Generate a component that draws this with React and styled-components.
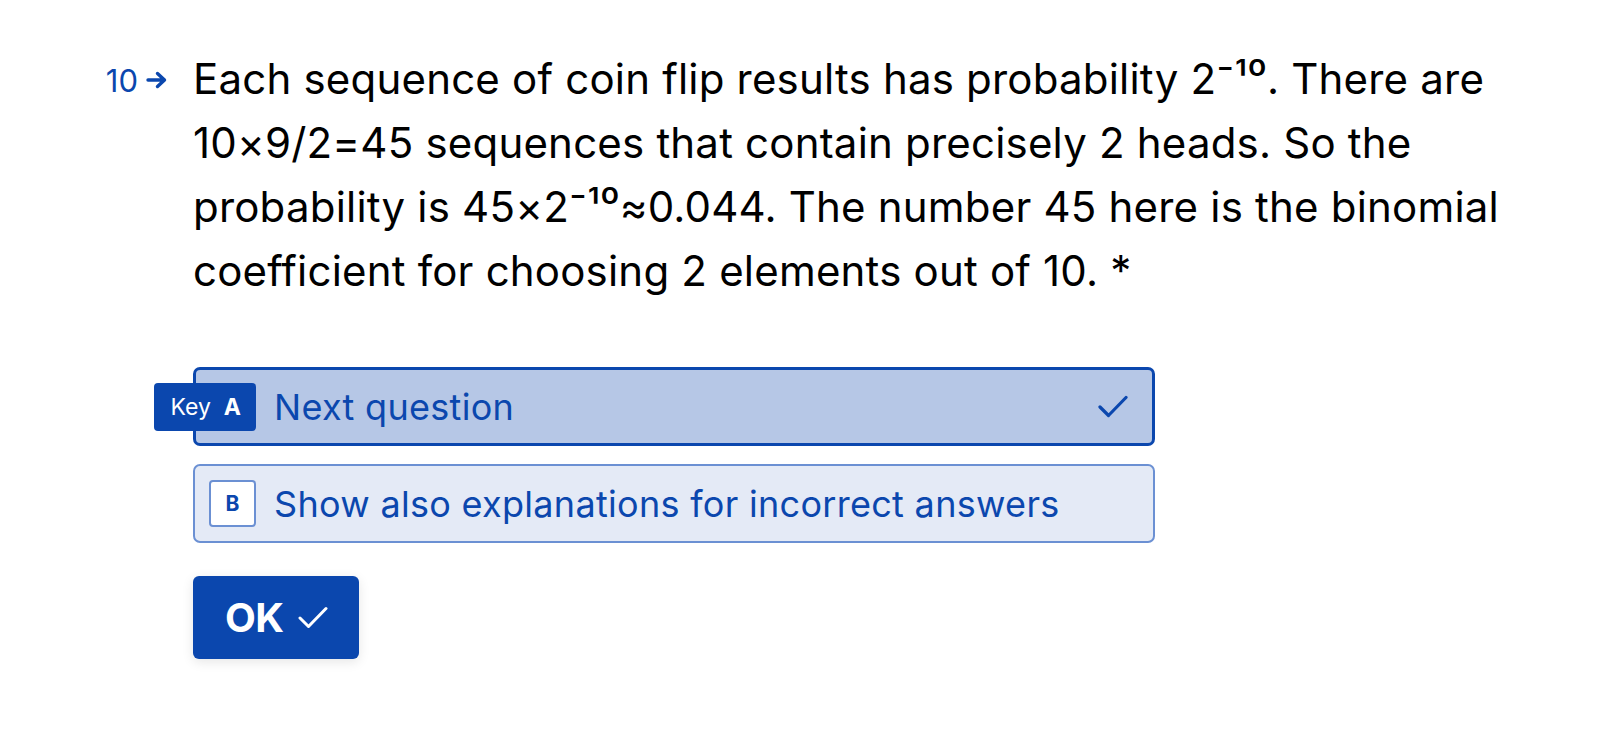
import React from 'react';
import styled, { createGlobalStyle } from 'styled-components';

const GlobalStyle = createGlobalStyle`
    html, body {
        margin: 0;
        padding: 0;
        background: #ffffff;
    }

    body {
        font-family: Inter, "Noto Sans", "Liberation Sans", sans-serif;
        -webkit-font-smoothing: antialiased;
    }
`;

const BLUE = '#0b47ae';

const Page = styled.div`
    display: flex;
    align-items: flex-start;
    padding-top: 47px;
    min-height: 754px;
    box-sizing: border-box;
`;

const Counter = styled.div`
    width: 193px;
    flex-shrink: 0;
    display: flex;
    justify-content: flex-end;
    align-items: center;
    gap: 8px;
    padding-right: 26px;
    box-sizing: border-box;
    height: 66px;
    color: ${BLUE};
    font-size: 31px;
`;

const Content = styled.div`
    display: flex;
    flex-direction: column;
    align-items: flex-start;
`;

const Question = styled.p`
    margin: 0 0 64px 0;
    width: 1350px;
    font-size: 42px;
    line-height: 64px;
    color: #000000;
    letter-spacing: 0.2px;
`;

const Options = styled.div`
    display: flex;
    flex-direction: column;
    gap: 18px;
`;

const Choice = styled.div`
    position: relative;
    display: flex;
    align-items: center;
    gap: 18px;
    width: 962px;
    height: 79px;
    box-sizing: border-box;
    padding: 0 24px 0 ${p => (p.$selected ? 13 : 14)}px;
    border: ${p => (p.$selected ? `3px solid ${BLUE}` : '2px solid #6b90d3')};
    border-radius: 7px;
    background: ${p => (p.$selected ? '#b6c7e6' : '#e4eaf6')};
    color: ${BLUE};
    font-size: 36px;
    letter-spacing: 0.3px;
`;

const KeySlot = styled.div`
    position: relative;
    width: 47px;
    height: 47px;
    flex-shrink: 0;
`;

const KeyHint = styled.div`
    position: absolute;
    right: 0;
    top: 50%;
    transform: translateY(-50%);
    display: flex;
    align-items: center;
    gap: 13px;
    height: 48px;
    padding: 0 15px 0 16px;
    border-radius: 4px;
    background: ${BLUE};
    color: #ffffff;
    font-size: 23px;
    letter-spacing: 0;
    white-space: nowrap;

    b {
        font-weight: 700;
    }
`;

const KeyBox = styled.div`
    display: flex;
    align-items: center;
    justify-content: center;
    width: 47px;
    height: 47px;
    box-sizing: border-box;
    border: 2px solid #6b90d3;
    border-radius: 4px;
    background: #ffffff;
    color: ${BLUE};
    font-size: 21px;
    font-weight: 700;
    letter-spacing: 0;
`;

const Label = styled.span`
    flex: 1;
`;

const OkButton = styled.button`
    margin-top: 33px;
    display: flex;
    align-items: center;
    gap: 14px;
    height: 83px;
    padding: 0 31px 0 32px;
    border: none;
    border-radius: 6px;
    background: ${BLUE};
    color: #ffffff;
    font-family: inherit;
    font-size: 40px;
    font-weight: 700;
    letter-spacing: -0.5px;
    box-shadow: 0 3px 12px rgba(0, 0, 0, 0.1);
    cursor: pointer;
`;

function Arrow() {
    return (
        <svg width="21" height="18" viewBox="0 0 21 18" fill="none">
            <path d="M2 9h16.5M11.5 2.5L18.5 9l-7 6.5" stroke={BLUE} strokeWidth="3.4" strokeLinecap="round" strokeLinejoin="round" />
        </svg>
    );
}

function Check({ color, width = 30, height = 23, stroke = 3 }) {
    return (
        <svg width={width} height={height} viewBox="0 0 30 23" fill="none">
            <path d="M2 12l8.5 8.5L28 2.5" stroke={color} strokeWidth={stroke} strokeLinecap="round" strokeLinejoin="round" />
        </svg>
    );
}

export default function App() {
    return (
        <>
            <GlobalStyle />
            <Page>
                <Counter>
                    <span>10</span>
                    <Arrow />
                </Counter>
                <Content>
                    <Question>
                        Each sequence of coin flip results has probability 2⁻¹⁰. There are
                        10×9/2=45 sequences that contain precisely 2 heads. So the
                        probability is 45×2⁻¹⁰≈0.044. The number 45 here is the binomial
                        coefficient for choosing 2 elements out of 10. *
                    </Question>
                    <Options>
                        <Choice $selected>
                            <KeySlot>
                                <KeyHint>
                                    <span>Key</span>
                                    <b>A</b>
                                </KeyHint>
                            </KeySlot>
                            <Label>Next question</Label>
                            <Check color={BLUE} stroke={3.2} />
                        </Choice>
                        <Choice>
                            <KeyBox>B</KeyBox>
                            <Label>Show also explanations for incorrect answers</Label>
                        </Choice>
                    </Options>
                    <OkButton>
                        OK
                        <Check color="#ffffff" />
                    </OkButton>
                </Content>
            </Page>
        </>
    );
}
